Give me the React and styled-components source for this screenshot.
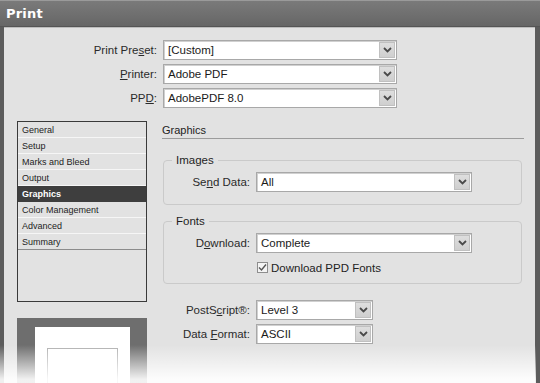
import React from "react";
import styled, { createGlobalStyle } from "styled-components";

const GlobalStyle = createGlobalStyle`
  html, body {
    margin: 0;
    padding: 0;
    background: #ffffff;
  }
  body {
    font-family: "Liberation Sans", Arial, sans-serif;
  }
`;

const sections = [
  "General",
  "Setup",
  "Marks and Bleed",
  "Output",
  "Graphics",
  "Color Management",
  "Advanced",
  "Summary",
];

function Chevron() {
  return (
    <svg width="9" height="6" viewBox="0 0 9 6">
      <polyline points="1,1 4.5,4.5 8,1" fill="none" stroke="#4a4a4a" strokeWidth="1.8" />
    </svg>
  );
}

function Select({ value, width }) {
  return (
    <SelectBox $width={width}>
      <SelectValue>{value}</SelectValue>
      <SelectButton>
        <Chevron />
      </SelectButton>
    </SelectBox>
  );
}

function Label({ before, mnemonic, after }) {
  return (
    <FieldLabel>
      {before}
      <Mnemonic>{mnemonic}</Mnemonic>
      {after}
    </FieldLabel>
  );
}

export default function App() {
  return (
    <>
      <GlobalStyle />
      <Window>
        <TitleBar>Print</TitleBar>
        <Body>
          <TopForm>
            <Label before="Print Pre" mnemonic="s" after="et:" />
            <Select value="[Custom]" width={234} />
            <Label before="" mnemonic="P" after="rinter:" />
            <Select value="Adobe PDF" width={234} />
            <Label before="PP" mnemonic="D" after=":" />
            <Select value="AdobePDF 8.0" width={234} />
          </TopForm>

          <Main>
            <LeftColumn>
              <SectionList>
                {sections.map((s) => (
                  <SectionItem key={s} $active={s === "Graphics"}>
                    {s}
                  </SectionItem>
                ))}
              </SectionList>
              <Preview>
                <PreviewPage>
                  <PreviewFrame />
                </PreviewPage>
              </Preview>
            </LeftColumn>

            <RightColumn>
              <Heading>Graphics</Heading>

              <Group $top={21}>
                <Legend>Images</Legend>
                <GroupRow>
                  <Label before="Se" mnemonic="n" after="d Data:" />
                  <Select value="All" width={216} />
                </GroupRow>
              </Group>

              <Group $top={16} $bottom={9}>
                <Legend>Fonts</Legend>
                <GroupRow>
                  <Label before="D" mnemonic="o" after="wnload:" />
                  <Select value="Complete" width={216} />
                </GroupRow>
                <CheckRow>
                  <CheckBox>
                    <svg width="9" height="9" viewBox="0 0 9 9">
                      <polyline points="1,4.5 3.5,7 8,1.5" fill="none" stroke="#555" strokeWidth="1.4" />
                    </svg>
                  </CheckBox>
                  <CheckText>Download PPD Fonts</CheckText>
                </CheckRow>
              </Group>

              <BottomForm>
                <Label before="PostS" mnemonic="c" after="ript®:" />
                <Select value="Level 3" width={117} />
                <Label before="Data " mnemonic="F" after="ormat:" />
                <Select value="ASCII" width={117} />
              </BottomForm>
            </RightColumn>
          </Main>
        </Body>
        <Fade />
      </Window>
    </>
  );
}

const Window = styled.div`
  position: relative;
  width: 540px;
  height: 383px;
  overflow: hidden;
  background: #5c5c5c;
  display: flex;
  flex-direction: column;
  padding: 0 4px 0 4px;
  box-sizing: border-box;
`;

const TitleBar = styled.div`
  flex-shrink: 0;
  height: 27px;
  margin: 0 -4px;
  padding-left: 6px;
  display: flex;
  align-items: center;
  background: linear-gradient(#7a7a7a, #666666);
  border-top: 1px solid #9a9a9a;
  border-bottom: 1px solid #555;
  box-sizing: border-box;
  color: #ffffff;
  font-family: "DejaVu Sans", "Liberation Sans", sans-serif;
  font-weight: bold;
  font-size: 13px;
  letter-spacing: 0.2px;
`;

const Body = styled.div`
  flex: 1;
  min-height: 0;
  overflow: hidden;
  background: #e2e2e2;
  border-top: 1px solid #bdbdbd;
  margin-right: 1px;
  font-size: 11.5px;
  color: #1e1e1e;
`;

const TopForm = styled.div`
  display: grid;
  grid-template-columns: 153px 234px;
  column-gap: 6px;
  row-gap: 4px;
  padding-top: 12px;
`;

const FieldLabel = styled.div`
  text-align: right;
  align-self: center;
  white-space: nowrap;
  color: #2a2a2a;
`;

const Mnemonic = styled.span`
  text-decoration: underline;
`;

const SelectBox = styled.div`
  width: ${(p) => p.$width}px;
  height: 20px;
  box-sizing: border-box;
  display: flex;
  align-items: center;
  background: #ffffff;
  border: 1px solid #a8a8a8;
  box-shadow: inset 1px 1px 0 #d0d0d0;
`;

const SelectValue = styled.div`
  flex: 1;
  padding-left: 4px;
  color: #1a1a1a;
  white-space: nowrap;
`;

const SelectButton = styled.div`
  width: 16px;
  height: 16px;
  margin-right: 1px;
  display: flex;
  align-items: center;
  justify-content: center;
  background: linear-gradient(#dedede, #cfcfcf);
  border: 1px solid #c0c0c0;
  box-sizing: border-box;
`;

const Main = styled.div`
  display: flex;
  gap: 15px;
  padding-left: 13px;
  margin-top: 13px;
`;

const LeftColumn = styled.div`
  width: 130px;
  display: flex;
  flex-direction: column;
  gap: 16px;
`;

const SectionList = styled.div`
  height: 181px;
  box-sizing: border-box;
  border: 1px solid #3a3a3a;
  background: #e2e2e2;
`;

const SectionItem = styled.div`
  height: 16px;
  box-sizing: border-box;
  padding-left: 4px;
  display: flex;
  align-items: center;
  font-size: 9px;
  font-weight: ${(p) => (p.$active ? "bold" : "normal")};
  color: ${(p) => (p.$active ? "#ffffff" : "#222")};
  background: ${(p) => (p.$active ? "#3e3e3e" : "transparent")};
  border-bottom: 1px solid ${(p) => (p.$active ? "#3e3e3e" : "#f6f6f6")};

  &:last-child {
    border-bottom-color: #8c8c8c;
  }
`;

const Preview = styled.div`
  flex-shrink: 0;
  height: 80px;
  background: #6e6e6e;
  padding: 9px 17px 0 18px;
`;

const PreviewPage = styled.div`
  height: 100%;
  background: #ffffff;
  padding: 21px 12px 0 12px;
  box-sizing: border-box;
`;

const PreviewFrame = styled.div`
  height: 60px;
  border: 1px solid #b0b0b0;
`;

const RightColumn = styled.div`
  width: 362px;
  display: flex;
  flex-direction: column;
`;

const Heading = styled.div`
  height: 17px;
  border-bottom: 1px solid #9c9c9c;
  font-size: 11px;
  color: #222;
  display: flex;
  align-items: center;
`;

const Group = styled.div`
  position: relative;
  width: 359px;
  margin-left: 1px;
  margin-top: ${(p) => p.$top}px;
  padding: 11px 0 ${(p) => p.$bottom ?? 12}px 0;
  border: 1px solid #cacaca;
  border-radius: 4px;
  box-sizing: border-box;
  display: flex;
  flex-direction: column;
  gap: 8px;
`;

const Legend = styled.div`
  position: absolute;
  top: -8px;
  left: 8px;
  padding: 0 4px;
  background: #e2e2e2;
  line-height: 14px;
`;

const GroupRow = styled.div`
  display: grid;
  grid-template-columns: 86px 216px;
  column-gap: 6px;
`;

const CheckRow = styled.div`
  display: flex;
  align-items: center;
  gap: 3px;
  padding-left: 93px;
  height: 13px;
`;

const CheckBox = styled.div`
  width: 11px;
  height: 11px;
  box-sizing: border-box;
  border: 1px solid #8e8e8e;
  background: #f4f4f4;
  display: flex;
  align-items: center;
  justify-content: center;
`;

const CheckText = styled.div`
  font-size: 11.5px;
  color: #222;
`;

const BottomForm = styled.div`
  display: grid;
  grid-template-columns: 88px 117px;
  column-gap: 6px;
  row-gap: 4px;
  margin-top: 16px;
`;

const Fade = styled.div`
  position: absolute;
  left: 0;
  right: 4px;
  bottom: 0;
  height: 38px;
  background: linear-gradient(rgba(255, 255, 255, 0), rgba(255, 255, 255, 0.9) 90%);
  pointer-events: none;
`;
